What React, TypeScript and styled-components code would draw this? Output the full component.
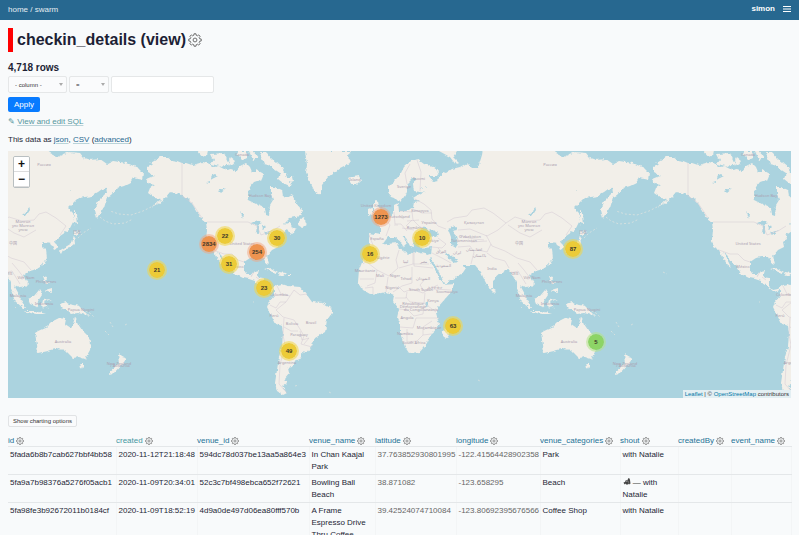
import React from "react";
import styled, { createGlobalStyle } from "styled-components";

const GlobalStyle = createGlobalStyle`
  * { box-sizing: border-box; }
  html { scrollbar-width: none; }
  html, body { margin: 0; padding: 0; }
  body {
    background: #f8fafb;
    color: #1d1f35;
    font: 8px/12px "Liberation Sans", Arial, Helvetica, sans-serif;
  }
`;

const Header = styled.header`
  display: flex;
  align-items: center;
  justify-content: space-between;
  height: 20px;
  padding: 0 8px;
  background: #276890;
  color: #e4edf2;
`;
const Crumbs = styled.nav`
  a { color: inherit; text-decoration: none; }
`;
const UserMenu = styled.div`
  display: flex;
  align-items: center;
  gap: 8px;
  margin-top: -2px;
  color: #fff;
  font-weight: bold;
`;
const IconButton = styled.button`
  display: inline-flex;
  padding: 0;
  border: 0;
  background: none;
  color: ${(p) => p.color || "#666"};
`;
const Content = styled.main`
  padding: 8px 8px 0;
`;
const TitleRow = styled.div`
  display: flex;
  align-items: center;
  gap: 2px;
  height: 24px;
  padding-left: 4px;
  border-left: 5px solid #f00;
`;
const Title = styled.h1`
  margin: 0;
  font-size: 16px;
  line-height: 26px;
`;
const RowCount = styled.h2`
  margin: 10px 0 2px;
  font-size: 10px;
  line-height: 12px;
`;
const FilterRow = styled.div`
  display: flex;
  gap: 2px;
  height: 17px;
`;
const SelectBox = styled.span<{ $width: number }>`
  position: relative;
  width: ${(p) => p.$width}px;
  &::after {
    content: "";
    position: absolute;
    top: 7px;
    right: 4px;
    border: 2px solid transparent;
    border-top: 3px solid #aaa;
    pointer-events: none;
  }
`;
const Select = styled.select`
  appearance: none;
  width: 100%;
  height: 17px;
  padding: 0 6px;
  border: 1px solid #e5e7e8;
  border-radius: 2px;
  background: #fafbfc;
  color: #333;
  font: 6px/12px "Liberation Sans", Arial, sans-serif;
`;
const TextInput = styled.input`
  width: 103px;
  height: 17px;
  border: 1px solid #e5e7e8;
  border-radius: 2px;
  background: #fff;
  font: inherit;
`;
const Apply = styled.button`
  display: block;
  height: 15px;
  margin: 4px 0;
  padding: 0 6px;
  border: 0;
  border-radius: 2px;
  background: #087bff;
  color: #fff;
  font: inherit;
`;
const Line = styled.p<{ $gap: number }>`
  margin: 0 0 ${(p) => p.$gap}px;
`;
const Pencil = styled.span`
  color: #54969d;
`;
const Link = styled.a<{ $muted?: boolean }>`
  color: ${(p) => (p.$muted ? "#54969d" : "#276890")};
  text-decoration: underline;
  text-decoration-thickness: 1px;
  text-decoration-color: #b9d3d9;
  text-underline-offset: 1px;
`;
const MapPanel = styled.section`
  position: relative;
  height: 247px;
  margin-bottom: 17px;
  overflow: hidden;
  background: #abd3df;
  > svg { display: block; width: 100%; height: 100%; }
`;
const ZoomControl = styled.div`
  position: absolute;
  top: 5px;
  left: 5px;
  display: grid;
  border: 1px solid #b9bfc1;
  border-radius: 2px;
  overflow: hidden;
`;
const ZoomButton = styled.button`
  width: 15px;
  height: 15px;
  padding: 0;
  border: 0;
  border-bottom: 1px solid #ddd;
  background: #fff;
  color: #111;
  font: bold 12px/15px "Liberation Sans", Arial, sans-serif;
`;
const tones = {
  orange: ["#ee9450", "#f1a68280"],
  yellow: ["#eccb38", "#f0d74c90"],
  green: ["#8dd466", "#b5e28c90"],
};
type Tone = keyof typeof tones;
const Cluster = styled.button<{ $x: number; $y: number; $tone: Tone }>`
  position: absolute;
  left: ${(p) => p.$x - 10}px;
  top: ${(p) => p.$y - 10}px;
  width: 20px;
  height: 20px;
  padding: 0;
  border: 2px solid ${(p) => tones[p.$tone][1]};
  border-radius: 50%;
  background: ${(p) => tones[p.$tone][0]};
  background-clip: padding-box;
  color: #40382a;
  font: bold 6px/16px "Liberation Sans", Arial, sans-serif;
  white-space: nowrap;
`;
const Attribution = styled.div`
  position: absolute;
  right: 0;
  bottom: 0;
  padding: 0 2px;
  background: #e3eff3;
  color: #333;
  font-size: 6px;
  line-height: 8px;
  a { color: #0078a8; text-decoration: none; }
`;
const ChartButton = styled.button`
  display: block;
  height: 12px;
  margin-bottom: 8px;
  padding: 0 4px;
  border: 1px solid #e1e3e5;
  border-radius: 2px;
  background: #fafbfc;
  color: #333;
  font: 6px/10px "Liberation Sans", Arial, sans-serif;
`;
const Table = styled.table`
  width: 100%;
  table-layout: fixed;
  border-collapse: collapse;
`;
const HeadCell = styled.th`
  height: 11px;
  padding: 0;
  text-align: left;
  font-weight: normal;
  line-height: 11px;
  white-space: nowrap;
  border-bottom: 1px solid #e4e7e9;
`;
const HeadInner = styled.span`
  display: flex;
  align-items: center;
  gap: 2px;
`;
const ColumnLink = styled.a<{ $muted?: boolean }>`
  color: ${(p) => (p.$muted ? "#4497a1" : "#1d7296")};
  text-decoration: none;
`;
const Cell = styled.td<{ $numeric?: boolean }>`
  padding: 2px 0 1px 2px;
  height: 28px;
  vertical-align: top;
  color: ${(p) => (p.$numeric ? "#666" : "#1d1f35")};
  border-bottom: 1px solid #e4e7e9;
  border-right: 1px solid #f3f5f6;
`;

const gearPath = (() => {
  const pts: string[] = [];
  const r = (a: number, d: number) =>
    `${(12 + d * Math.cos(a)).toFixed(2)} ${(12 + d * Math.sin(a)).toFixed(2)}`;
  for (let i = 0; i < 8; i++) {
    const a = (i * Math.PI) / 4;
    pts.push(r(a - 0.24, 8.4), r(a - 0.16, 10.8), r(a + 0.16, 10.8), r(a + 0.24, 8.4));
  }
  return `M${pts.join("L")}Z`;
})();

const Gear = ({ size, stroke }: { size: number; stroke: number }) => (
  <svg width={size} height={size} viewBox="0 0 24 24" fill="none" stroke="currentColor" strokeWidth={stroke} strokeLinejoin="round">
    <path d={gearPath} />
    <circle cx="12" cy="12" r="3.3" />
  </svg>
);

const land = [
  // North and South America
  "160,157 167,157 171,160 177,161 182,163 187,163 193,165 203,162 210,164 213,167 218,166 226,170 231,169 236,171 240,166 246,163 250,167 252,172 258,172 257,176 262,177 260,180 254,182 250,187 248,194 248,200 256,204 265,208 266,215 269,216 270,205 273,200 271,194 271,187 275,187 282,190 283,196 287,198 292,195 295,202 302,210 300,216 290,218 283,225 290,222 292,227 297,229 290,235 287,230 280,235 281,239 277,242 278,247 272,250 267,256 269,264 266,263 263,257 256,257 250,258 244,262 244,270 247,275 252,275 255,271 259,270 257,277 263,278 263,286 267,290 272,289 277,285 282,284 288,286 300,287 307,295 312,302 322,303 332,309 332,313 327,320 325,332 315,338 312,346 307,353 301,352 302,358 295,361 292,367 288,368 289,373 285,378 287,383 282,387 287,393 283,395 277,391 275,383 277,370 279,357 282,347 283,333 282,326 275,323 271,315 267,307 269,302 274,296 274,290 268,292 260,285 255,281 249,279 243,278 235,274 232,268 226,263 221,255 217,252 220,257 225,267 221,264 216,256 213,250 208,247 206,240 207,230 206,222 201,218 196,210 191,202 185,196 176,193 170,192 165,198 158,204 151,208 161,199 155,198 148,193 150,188 155,185 149,184 146,179 151,177 155,176 148,172 148,167 152,165 150,163",
  "305,151 307,165 306,172 310,182 315,192 320,195 322,185 328,177 340,168 350,163 348,156 351,151",
  "348,178 350,177 353,177 359,176 361,180 357,184 352,184 350,181",
  "260,153 267,153 272,159 282,167 287,177 293,177 294,181 289,182 292,187 283,183 278,179 280,173 274,169 268,165 264,164",
  "199,151 207,151 206,156 201,157", "211,154 224,153 229,164 222,167 211,164 214,160", "238,151 247,151 247,158 243,160 237,154", "249,151 253,151 258,158 253,160", "257,170 264,174 261,181 257,178", "231,157 236,161 233,165 228,163",
  "300,219 304,217 307,225 301,227 298,225",
  "264,269 271,268 278,272 275,273 267,270", "279,272 286,273 282,276 278,274", "288,274 291,274 291,275 288,275",
  // Europe, Asia and Africa
  "388,187 393,182 400,175 404,167 411,161 417,159 424,164 436,168 439,172 437,176 428,176 433,182 438,181 439,177 443,172 446,173 452,169 460,167 467,163 472,168 478,168 482,155 483,149 550,149 555,153 563,157 575,152 586,153 590,158 596,160 606,159 613,164 619,161 633,163 644,168 649,173 648,180 639,178 636,183 630,186 623,188 617,195 613,197 610,207 603,218 601,210 604,202 613,193 612,187 605,192 598,196 584,198 574,208 579,213 580,220 575,230 566,236 561,241 564,248 560,250 557,243 550,242 547,245 552,250 553,258 549,265 543,269 536,271 529,276 534,284 529,289 524,285 521,287 527,298 524,298 518,291 516,282 512,274 508,270 501,273 493,280 493,287 489,289 483,277 481,272 475,265 463,265 456,259 447,253 445,254 449,259 453,262 459,261 466,268 462,274 444,284 441,276 435,265 431,257 429,259 438,275 443,284 454,283 452,291 438,307 436,313 439,323 437,328 431,333 427,343 420,352 409,353 405,347 400,333 400,325 397,318 399,309 393,301 394,295 387,292 382,293 370,294 363,290 358,282 359,270 363,260 370,251 376,246 387,244 398,243 400,249 408,255 413,251 428,255 431,254 432,247 425,248 419,246 417,240 413,239 414,247 410,246 406,238 401,234 407,243 403,247 402,243 395,237 388,237 382,245 376,249 370,246 369,233 380,235 380,226 376,223 383,222 390,217 394,212 394,205 398,203 399,211 406,211 413,208 414,202 419,201 413,198 421,193 426,193 414,191 413,184 417,178 413,178 407,184 407,191 404,197 400,202 397,199 391,197 388,193",
  "374,199 378,201 379,207 384,214 382,218 375,219 377,214 374,212", "368,210 373,208 373,214 368,216",
  "439,151 457,151 453,157 459,163 456,165 450,157",
  "580,209 583,215 584,225 581,222 580,226", "580,231 587,232 584,235 580,234", "580,236 581,244 576,248 569,250 567,254 565,251 573,246 578,243",
  "549,276 553,277 552,282 556,284 552,284", "551,290 558,288 558,293 554,291",
  "534,299 540,296 545,290 548,295 544,301 543,307 536,304", "517,291 525,297 532,308 529,308 521,301", "529,311 541,311 552,314 542,314", "549,300 557,299 550,302 555,309 551,306 549,309 548,304",
  "566,304 571,302 575,304 585,306 591,312 595,316 588,314 584,313 577,314 572,310 567,308", "491,288 496,291 494,293 492,291",
  "541,333 544,331 553,327 559,321 565,318 572,319 571,324 577,328 579,326 581,316 584,324 588,330 593,335 597,342 596,350 591,359 585,357 579,358 574,353 571,350 569,351 566,348 553,351 544,353 543,345",
  "585,364 590,364 588,369 586,368", "624,353 628,357 632,358 628,364 619,374 615,375 616,371 625,364",
  "443,331 448,326 452,322 450,332 446,339 442,336",
];
const seas = [
  "420,235 421,229 425,227 429,230 433,229 438,234 436,237 427,236",
  "448,229 455,226 457,230 452,231 456,236 458,244 456,247 451,244 451,237",
  "251,223 258,220 262,223 257,225", "257,226 259,225 259,234 256,233", "262,225 267,226 263,230", "264,233 272,230 266,235",
  "528,216 533,212 535,206 536,210 532,216", "425,303 429,301 429,305 426,306",
  "210,176 215,174 218,176 212,179", "218,191 226,188 220,193", "240,211 244,215 243,219", "207,182 210,181 210,183",
  "421,187 423,187 423,189", "425,186 427,188 425,188",
];
const dots = [
  "M161 200l-10 7-8 4-12 4-12-1-9-3", "M606 217l5 4 8 3 12-1 8-4", "M584 238l5-5 8-5", "M588 309l8 4 4 4", "M611 331l4 4M631 325l2-1M616 322l3 5", "M576 190l1 1M253 302h1M285 176l1 1", "M295 386l4-1M329 392l2 1M478 380l2 1M157 272l4 2M521 307l1 1",
];
const borders = [
  "M182 163V196L192 203L202 218", "M207 222H248L257 226L261 235L272 231L280 226", "M213 250L224 254H232L238 260L244 262", "M251 277L254 272M256 277L260 280",
  "M277 286L281 294L290 296L286 302L280 302L276 308L270 305M290 296L294 290L300 295L307 294M286 302L276 310L283 317L294 320L300 329L304 336L301 344L312 347M284 327L291 331L298 331M284 318L283 335L285 345L280 365L279 384L287 393M300 331L302 340L309 338L304 344",
  "M410 164L405 173L407 184M417 160L421 172L420 191M415 199L424 204L431 210L432 219L438 226L446 229M400 211L412 212L413 220L421 228M385 218L390 225L386 236M394 212L395 224L401 224L407 231M407 221L419 220M402 228L414 230M369 235L373 245M413 209L422 213L432 213M412 220L406 226M420 238L413 237",
  "M447 222L454 218L467 216L472 210L484 208L493 213L506 223L498 230L487 236L470 229L458 230M506 223L515 217L528 221L540 220L545 214L552 212L562 218L572 226L566 235M508 225L520 233L530 237L542 230M486 235L492 246L505 251L517 258L530 262L537 270M458 247L470 246L474 252L471 264M478 250L487 252L491 244M471 242L487 241M460 236L474 239L484 240M487 253L494 258L505 261L509 268M438 248L443 254M432 247L442 248L446 244L438 238M432 253L442 258L451 263M511 273L518 271L526 284M518 263L524 270L530 278",
  "M373 248L374 255L363 264M364 260L377 270L389 276L398 268L396 260L399 250M399 268L413 264L413 253M414 266L433 268M412 267V283L402 286L393 292M377 270L375 283L367 286M388 277L386 292M360 279H374M365 288L373 287V294M398 286L404 292L412 289L423 293L431 288L438 285M395 298H406L407 292M406 297L410 302L424 303L425 293M399 309L408 310L414 316L423 314L424 305M424 303L436 312M400 327L413 328L416 318L427 318L439 318M407 329V342L417 341L423 335V327L432 321M423 335L431 334M433 289L451 290",
  "M394 225h4M400 217l4 2M414 266V250M425 292l-5-7 6-7M429 264h-16",
];
type Place = [number, number, string];
const places: Place[] = [
  [242, 156, "Canada"], [242, 245, "United States"], [237, 268, "México"], [260, 197, "Hudson Bay"], [355, 181, "Ísland"],
  [279, 296, "Colombia"], [274, 317, "Perú"], [292, 325, "Bolivia"], [311, 324, "Brasil"], [299, 336, "Paraguay"], [287, 364, "Argentina"],
  [376, 207, "United Kingdom"], [398, 218, "Deutschland"], [377, 240, "España"], [404, 188, "Sverige"], [419, 180, "Suomi"], [420, 212, "Беларусь"], [429, 224, "Україна"], [415, 229, "România"], [432, 242, "Türkiye"],
  [550, 166, "Россия"], [474, 224, "Қазақстан"], [529, 223, "Монгол"], [529, 227, "улс Монгол"], [529, 231, "улсы"], [519, 245, "中国"], [470, 238, "O‘zbekiston"], [464, 242, "Türkmenistan"],
  [441, 253, "العراق"], [457, 254, "ایران"], [474, 251, "افغانستان"], [479, 257, "پاکستان"], [492, 270, "India"], [443, 267, "السعودية"], [423, 263, "مصر"], [405, 263, "ليبيا"], [383, 259, "Algérie"], [365, 272, "Mauritanie"], [380, 277, "Mali"], [395, 277, "Niger"], [406, 280, "Tchad"], [423, 280, "السودان"], [392, 289, "Nigeria"], [421, 291, "South Sudan"], [435, 289, "ኢትዮጵያ"], [447, 293, "Soomaaliya"], [433, 302, "Kenya"], [413, 305, "République"], [413, 308, "Démocratique"], [413, 311, "du Congo"], [430, 311, "Tanzania"], [407, 319, "Angola"], [405, 335, "Namibia"], [429, 329, "Moçambique"], [414, 344, "South Africa"],
  [514, 275, "ไทย"], [532, 279, "Việt Nam"], [552, 283, "Philippines"], [524, 297, "Malaysia"], [550, 305, "Indonesia"], [587, 311, "Papua Niugini"], [569, 343, "Australia"], [625, 365, "New Zealand"], [626, 367, "/ Aotearoa"], [583, 234, "日本"],
];

const WorldMap = () => (
  <svg viewBox="8 151 783 247" preserveAspectRatio="xMinYMin slice" role="img" aria-label="World map of checkins">
    <defs>
      <filter id="coast" x="-5%" y="-5%" width="110%" height="110%">
        <feTurbulence type="fractalNoise" baseFrequency="0.22" numOctaves="3" seed="4" result="n" />
        <feDisplacementMap in="SourceGraphic" in2="n" scale="4" xChannelSelector="R" yChannelSelector="G" />
      </filter>
      <g id="world">
        <g filter="url(#coast)">
          <g fill="#f2efe9">{land.map((p) => <polygon key={p} points={p} />)}</g>
          <g fill="#abd3df">{seas.map((p) => <polygon key={p} points={p} />)}</g>
        </g>
        <g fill="none" stroke="#d3e0df" strokeWidth="1" strokeDasharray="2 2">{dots.map((d) => <path key={d} d={d} />)}</g>
        <g fill="none" stroke="#d3c8d2" strokeWidth="0.5">{borders.map((d) => <path key={d} d={d} />)}</g>
        <g fill="#aaa0b0" fontSize="4" textAnchor="middle" fontFamily="Noto Sans, Noto Sans CJK SC, sans-serif">
          {places.map(([x, y, name]) => <text key={name} x={x} y={y}>{name}</text>)}
        </g>
      </g>
    </defs>
    <use href="#world" x="-506" />
    <use href="#world" />
    <use href="#world" x="506" />
  </svg>
);

const clusters: [number, number, number, Tone][] = [
  [149, 119, 21, "yellow"], [201, 93, 2834, "orange"], [217, 85, 22, "yellow"], [269, 87, 30, "yellow"],
  [249, 101, 254, "orange"], [221, 113, 31, "yellow"], [256, 137, 23, "yellow"], [281, 200, 49, "yellow"],
  [373, 66, 1273, "orange"], [362, 103, 16, "yellow"], [414, 87, 10, "yellow"], [565, 98, 87, "yellow"],
  [445, 175, 63, "yellow"], [588, 191, 5, "green"],
];

const columns: [string, number][] = [
  ["id", 108], ["created", 81], ["venue_id", 112], ["venue_name", 66], ["latitude", 81],
  ["longitude", 84], ["venue_categories", 80], ["shout", 58], ["createdBy", 53], ["event_name", 60],
];

const Horse = () => (
  <svg width="8" height="8" viewBox="0 0 16 16" fill="#444" aria-label="horse">
    <path d="M1 11l3-1 1-3 4-1 2-4 2 1 1 3 1 7-2 2-1-2-2 2H6l-1-2-2 2-1-2z" />
    <path d="M5 8l3 1M9 7l2 4" stroke="#ddd" />
  </svg>
);

const rows: React.ReactNode[][] = [
  ["5fada6b8b7cab627bbf4bb58", "2020-11-12T21:18:48", "594dc78d037be13aa5a864e3", "In Chan Kaajal Park", "37.763852930801995", "-122.41564428902358", "Park", "with Natalie", "", ""],
  ["5fa9a7b98376a5276f05acb1", "2020-11-09T20:34:01", "52c3c7bf498ebca652f72621", "Bowling Ball Beach", "38.871082", "-123.658295", "Beach", <><Horse /> — with Natalie</>, "", ""],
  ["5fa98fe3b92672011b0184cf", "2020-11-09T18:52:19", "4d9a0de497d06ea80fff570b", "A Frame Espresso Drive Thru Coffee", "39.42524074710084", "-123.80692395676566", "Coffee Shop", "with Natalie", "", ""],
];

export default function App() {
  return (
    <>
      <GlobalStyle />
      <Header>
        <Crumbs><a href="#home">home</a> / <a href="#swarm">swarm</a></Crumbs>
        <UserMenu>
          simon
          <IconButton color="#fff" aria-label="Menu">
            <svg width="8" height="8" viewBox="0 0 8 8" stroke="currentColor"><path d="M0 1.5h8M0 4h8M0 6.5h8" /></svg>
          </IconButton>
        </UserMenu>
      </Header>
      <Content>
        <TitleRow>
          <Title>checkin_details (view)</Title>
          <IconButton aria-label="View actions"><Gear size={14} stroke={1.6} /></IconButton>
        </TitleRow>
        <RowCount>4,718 rows</RowCount>
        <form onSubmit={(e) => e.preventDefault()}>
          <FilterRow>
            <SelectBox $width={59}><Select aria-label="Column"><option>- column -</option></Select></SelectBox>
            <SelectBox $width={40}><Select aria-label="Operator"><option>=</option></Select></SelectBox>
            <TextInput aria-label="Value" />
          </FilterRow>
          <Apply type="submit">Apply</Apply>
        </form>
        <Line $gap={6}><Pencil>✎</Pencil> <Link $muted href="#sql">View and edit SQL</Link></Line>
        <Line $gap={5}>This data as <Link href="#json">json</Link>, <Link href="#csv">CSV</Link> (<Link href="#advanced">advanced</Link>)</Line>
        <MapPanel>
          <WorldMap />
          {clusters.map(([x, y, count, tone]) => (
            <Cluster key={count} $x={x} $y={y} $tone={tone}>{count}</Cluster>
          ))}
          <ZoomControl>
            <ZoomButton aria-label="Zoom in">+</ZoomButton>
            <ZoomButton aria-label="Zoom out">−</ZoomButton>
          </ZoomControl>
          <Attribution><a href="#leaflet">Leaflet</a> | © <a href="#osm">OpenStreetMap</a> contributors</Attribution>
        </MapPanel>
        <ChartButton>Show charting options</ChartButton>
        <Table>
          <colgroup>{columns.map(([name, width]) => <col key={name} width={width} />)}</colgroup>
          <thead>
            <tr>
              {columns.map(([name]) => (
                <HeadCell key={name} scope="col">
                  <HeadInner>
                    <ColumnLink href={`#${name}`} $muted={name === "created"}>{name}</ColumnLink>
                    <IconButton aria-label={`${name} options`}><Gear size={8} stroke={2} /></IconButton>
                  </HeadInner>
                </HeadCell>
              ))}
            </tr>
          </thead>
          <tbody>
            {rows.map((row, r) => (
              <tr key={r}>{row.map((value, c) => <Cell key={c} $numeric={c === 4 || c === 5}>{value}</Cell>)}</tr>
            ))}
          </tbody>
        </Table>
      </Content>
    </>
  );
}
